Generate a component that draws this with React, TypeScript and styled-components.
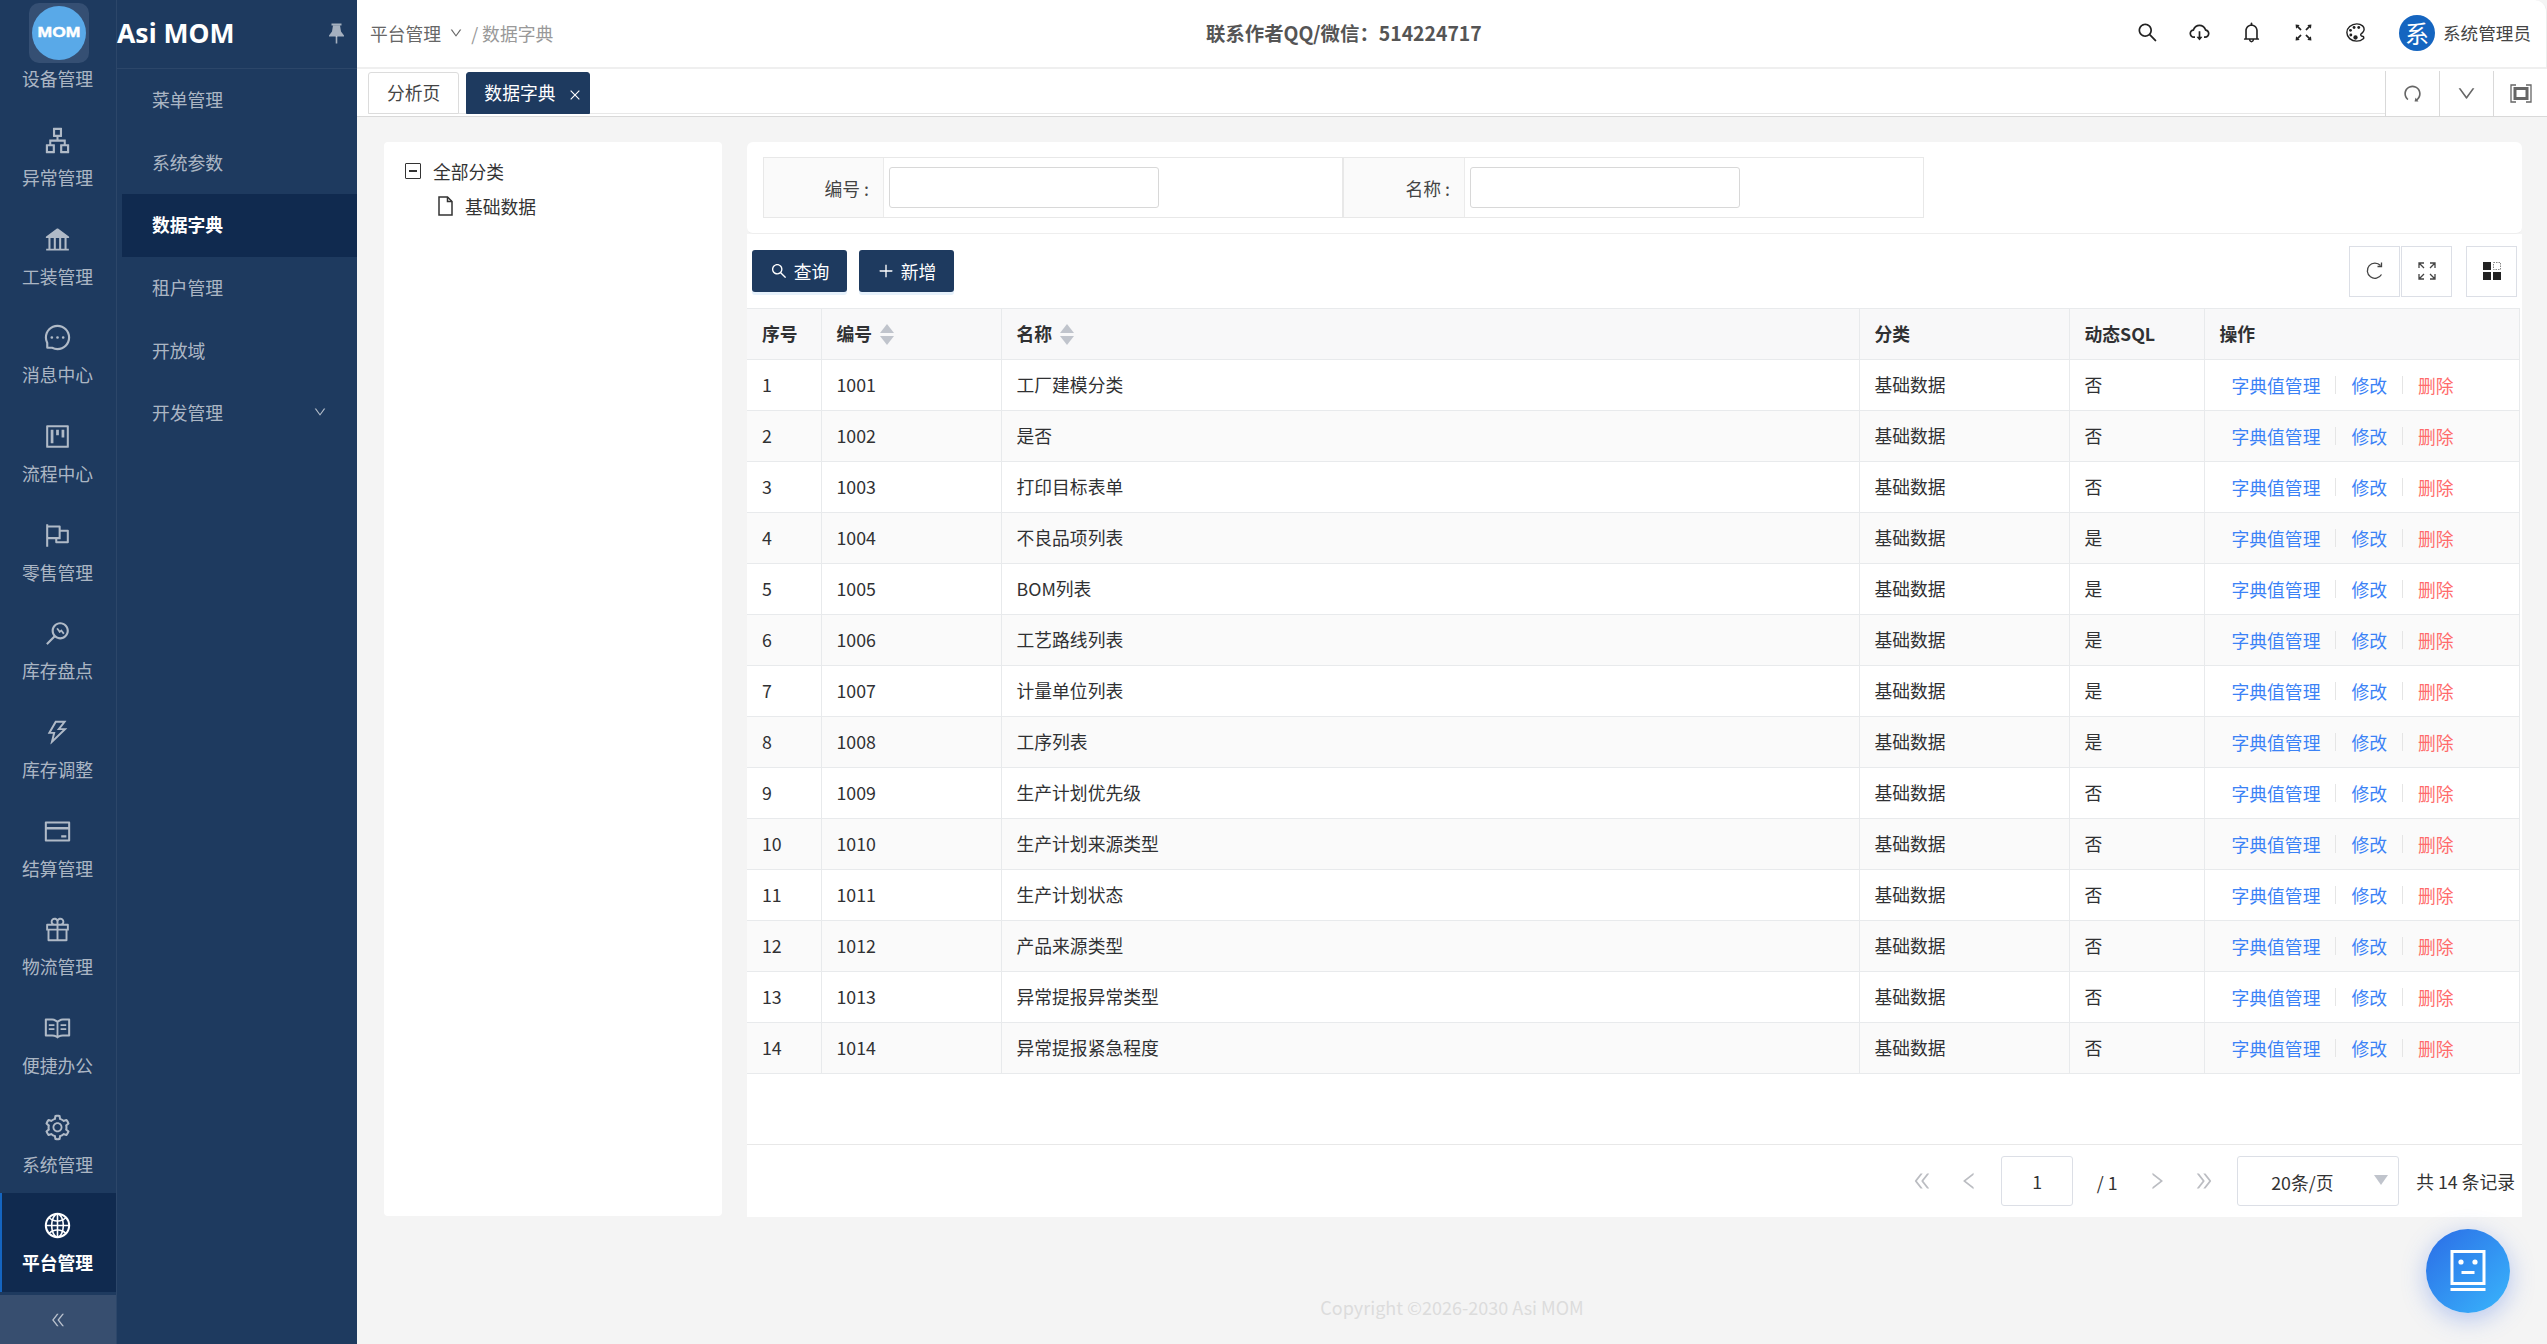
import React from 'react';
import styled, { createGlobalStyle } from 'styled-components';
import {
  AiOutlineApartment,
  AiFillBank,
  AiOutlineMessage,
  AiOutlineProject,
  AiOutlineFlag,
  AiOutlineMonitor,
  AiOutlineThunderbolt,
  AiOutlineCreditCard,
  AiOutlineGift,
  AiOutlineRead,
  AiOutlineSetting,
  AiOutlineGlobal,
  AiOutlineSearch,
  AiOutlineCloudDownload,
  AiOutlineBell,
  AiOutlineFullscreen,
  AiOutlineRedo,
  AiOutlineDown,
  AiOutlineClose,
  AiOutlinePlus,
  AiOutlineDoubleLeft,
  AiOutlineDoubleRight,
  AiOutlineLeft,
  AiOutlineRight,
} from 'react-icons/ai';
import { IoColorPaletteOutline } from 'react-icons/io5';

const FONT = '"Noto Sans CJK SC", "Noto Sans", sans-serif';

const GlobalStyle = createGlobalStyle`
  html, body {
    margin: 0;
    padding: 0;
    height: 100%;
    overflow: hidden;
    font-family: ${FONT};
    font-size: 17.5px;
    color: #303133;
  }
  * {
    box-sizing: border-box;
  }
`;

const Layout = styled.div`
  display: flex;
  width: 2547px;
  height: 1344px;
  background: #f4f4f4;
  position: relative;
  overflow: hidden;
`;

const Rail = styled.aside`
  width: 117px;
  flex: none;
  display: flex;
  flex-direction: column;
  background: #1e3a5f;
  border-right: 1px solid #2c4669;
`;

const LogoTile = styled.div`
  position: absolute;
  left: 29px;
  top: 3px;
  width: 60px;
  height: 60px;
  border-radius: 10px;
  background: #354f73;
  display: flex;
  align-items: center;
  justify-content: center;
`;

const LogoCircle = styled.div`
  width: 54px;
  height: 54px;
  border-radius: 50%;
  background: #59a9e8;
  display: flex;
  align-items: center;
  justify-content: center;
`;

const LogoText = styled.span`
  color: #fff;
  font: 900 17.5px "Liberation Sans", sans-serif;
  -webkit-text-stroke: 0.5px #fff;
  transform: scaleY(0.85);
  margin-top: -1px;
`;

const RailList = styled.div`
  flex: 1;
  min-height: 0;
  overflow: hidden;
  display: flex;
  flex-direction: column;
  justify-content: flex-end;
`;

const RailItem = styled.div<{ $active?: boolean }>`
  height: 98.7px;
  flex: none;
  display: flex;
  flex-direction: column;
  align-items: center;
  justify-content: center;
  gap: 9px;
  padding: ${(p) => (p.$active ? '0 1px 0 0' : '1.5px 1px 0 0')};
  font-size: 17.8px;
  line-height: 26px;
  color: ${(p) => (p.$active ? '#fff' : 'rgba(255, 255, 255, 0.65)')};
  font-weight: ${(p) => (p.$active ? 700 : 400)};
  background: ${(p) => (p.$active ? '#102a4f' : 'transparent')};
  box-shadow: ${(p) => (p.$active ? 'inset 2px 0 0 #1565c0' : 'none')};
  svg {
    font-size: 29px;
    display: block;
  }
`;

const Collapse = styled.div`
  height: 49px;
  margin-top: 3px;
  flex: none;
  background: #374e6f;
  display: flex;
  align-items: center;
  justify-content: center;
  color: rgba(255, 255, 255, 0.65);
  font-size: 18px;
`;

const SubMenu = styled.nav`
  width: 240px;
  flex: none;
  background: #1e3a5f;
  display: flex;
  flex-direction: column;
`;

const SubHead = styled.div`
  height: 69px;
  flex: none;
  display: flex;
  align-items: center;
  justify-content: space-between;
  padding: 0 13px 2px 0;
  border-bottom: 1px solid #2c4669;
`;

const AppTitle = styled.div`
  color: #fff;
  font-size: 26.5px;
  font-weight: 700;
  font-family: "Noto Sans", sans-serif;
`;

const SubList = styled.div`
  padding: 0 0 0 5px;
`;

const SubItem = styled.div<{ $active?: boolean }>`
  height: 62.7px;
  display: flex;
  align-items: center;
  justify-content: space-between;
  padding: 0 30px 3px 30px;
  font-size: 17.8px;
  color: ${(p) => (p.$active ? '#fff' : 'rgba(255, 255, 255, 0.65)')};
  font-weight: ${(p) => (p.$active ? 700 : 400)};
  background: ${(p) => (p.$active ? '#102a4f' : 'transparent')};
  svg {
    font-size: 14px;
  }
`;

const Main = styled.main`
  flex: 1;
  min-width: 0;
  display: flex;
  flex-direction: column;
`;

const Header = styled.header`
  height: 69px;
  flex: none;
  background: #fff;
  border-bottom: 2px solid #efefef;
  border-right: 1px solid #eee;
  border-top-right-radius: 12px;
  display: grid;
  grid-template-columns: 836px auto 1fr;
  align-items: center;
  padding: 0 15px 2px 13px;
`;

const Crumbs = styled.div`
  display: flex;
  align-items: center;
  gap: 8px;
  font-size: 17.8px;
  color: #666;
  svg {
    font-size: 14px;
  }
`;

const CrumbCurrent = styled.span`
  color: #999;
`;

const Contact = styled.div`
  font-size: 19.4px;
  font-weight: 700;
  color: #555;
`;

const HeadActions = styled.div`
  display: flex;
  align-items: center;
  justify-content: flex-end;
`;

const HeadIcon = styled.span`
  width: 52px;
  display: flex;
  justify-content: center;
  color: #222;
  font-size: 23px;
`;

const User = styled.div`
  display: flex;
  align-items: center;
  gap: 8px;
  margin-left: 18px;
  font-size: 17.6px;
  color: #444;
`;

const Avatar = styled.div`
  width: 36px;
  height: 36px;
  border-radius: 50%;
  background: #1565c0;
  color: #fff;
  display: flex;
  align-items: center;
  justify-content: center;
  font-size: 24px;
`;

const TabBar = styled.div`
  height: 48px;
  flex: none;
  background: #fff;
  border-bottom: 1px solid #d9d9d9;
  display: flex;
  align-items: flex-start;
  justify-content: space-between;
  padding-left: 11px;
`;

const Tabs = styled.div`
  display: flex;
  gap: 7px;
  align-items: flex-end;
  flex: 1;
  height: 45px;
  border-bottom: 1px solid #e8e8e8;
`;

const Tab = styled.div<{ $active?: boolean }>`
  height: 42px;
  margin-bottom: -1px;
  padding: ${(p) => (p.$active ? '0 7px 2px 17px' : '0 18px 2px')};
  display: flex;
  align-items: center;
  gap: 12px;
  font-size: 17.8px;
  border-radius: 3px 3px 0 0;
  background: ${(p) => (p.$active ? '#1e3a5f' : '#fff')};
  color: ${(p) => (p.$active ? '#fff' : '#444')};
  border: 1px solid ${(p) => (p.$active ? '#1e3a5f' : '#dcdcdc')};
  svg {
    font-size: 14px;
    margin-top: 5px;
  }
`;

const TabTools = styled.div`
  display: flex;
  height: 100%;
  padding-top: 2px;
`;

const TabTool = styled.div`
  width: 54px;
  display: flex;
  align-items: center;
  justify-content: center;
  border-left: 1px solid #d9d9d9;
  color: #666;
  font-size: 21px;
`;

const Content = styled.div`
  flex: 1;
  min-height: 0;
  display: flex;
  gap: 25px;
  padding: 25px 25px 0 27px;
`;

const TreeCard = styled.section`
  width: 338px;
  height: 1074px;
  flex: none;
  background: #fff;
  border-radius: 4px;
  padding: 11px 20px;
`;

const TreeRow = styled.div<{ $child?: boolean }>`
  display: flex;
  align-items: center;
  height: 35px;
  gap: 12px;
  padding-left: ${(p) => (p.$child ? '34px' : '1px')};
  font-size: 17.8px;
  color: #333;
`;

const FoldBox = styled.span`
  width: 16px;
  height: 16px;
  border: 1.5px solid #333;
  border-radius: 1px;
  display: flex;
  align-items: center;
  justify-content: center;
  &::before {
    content: '';
    width: 8px;
    height: 2px;
    background: #333;
  }
`;

const RightPanel = styled.section`
  width: 1775px;
  height: 1075px;
  flex: none;
  display: flex;
  flex-direction: column;
`;

const SearchCard = styled.div`
  height: 92px;
  flex: none;
  background: #fff;
  border-radius: 6px;
  padding: 15px 16px;
  border-bottom: 1px solid #eee;
`;

const SearchTable = styled.div`
  width: 1161px;
  height: 61px;
  display: grid;
  grid-template-columns: 120px 460px 121px 458px;
  border: 1px solid #e8e8e8;
`;

const SearchLabel = styled.div`
  background: #fafafa;
  display: flex;
  align-items: center;
  justify-content: flex-end;
  padding-right: 14px;
  font-size: 17.8px;
  color: #444;
  border-right: 1px solid #ebebeb;
`;

const SearchCell = styled.div`
  display: flex;
  align-items: center;
  padding-left: 5px;
  border-right: 2px solid #e8e8e8;
  &:last-child {
    border-right: none;
  }
`;

const TextInput = styled.input`
  width: 270px;
  height: 41px;
  border: 1px solid #d8d8d8;
  border-radius: 3px;
  background: #fff;
  outline: none;
`;

const GridCard = styled.div`
  flex: 1;
  min-height: 0;
  background: #fff;
  display: flex;
  flex-direction: column;
`;

const Toolbar = styled.div`
  height: 74px;
  flex: none;
  display: flex;
  align-items: center;
  justify-content: space-between;
  padding: 0 5px;
`;

const ToolGroup = styled.div`
  display: flex;
  gap: 12px;
`;

const PrimaryButton = styled.button`
  width: 95px;
  height: 42px;
  border: none;
  border-radius: 3px;
  background: #1e3a5f;
  color: #fff;
  font-family: ${FONT};
  font-size: 17.8px;
  display: flex;
  align-items: center;
  justify-content: center;
  gap: 6px;
  box-shadow: 0 3px 0 #e6f1fb;
  svg {
    font-size: 18px;
  }
`;

const IconGroup = styled.div`
  display: flex;
  gap: 1px;
`;

const SquareButton = styled.div<{ $gap?: boolean }>`
  width: 51px;
  height: 51px;
  border: 1px solid #dcdfe6;
  background: #fff;
  display: flex;
  align-items: center;
  justify-content: center;
  margin-left: ${(p) => (p.$gap ? '13px' : '0')};
  color: #444;
`;

const GridTable = styled.table`
  width: 1772px;
  border-collapse: collapse;
  table-layout: fixed;
  font-size: 17.8px;
  border-top: 1px solid #e8eaec;
  th {
    height: 51px;
    background: #f8f8f9;
    font-weight: 700;
    color: #303133;
    text-align: left;
    padding: 0 15px 2px;
    border: 1px solid #e8eaec;
    border-top: none;
  }
  td {
    height: 51px;
    padding: 0 15px 2px;
    color: #303133;
    border: 1px solid #e8eaec;
  }
  tr:nth-child(even) td {
    background: #fafafa;
  }
  th:first-child,
  td:first-child {
    border-left: none;
  }
`;

const SortHead = styled.div`
  display: flex;
  align-items: center;
  gap: 8px;
`;

const SortArrows = styled.span`
  display: flex;
  flex-direction: column;
  gap: 3px;
  margin-top: 2px;
  &::before,
  &::after {
    content: '';
    width: 0;
    height: 0;
    border-left: 7px solid transparent;
    border-right: 7px solid transparent;
  }
  &::before {
    border-bottom: 9px solid #c0c4cc;
  }
  &::after {
    border-top: 9px solid #c0c4cc;
  }
`;

const Actions = styled.div`
  display: flex;
  align-items: center;
  padding: 2px 0 0 12px;
  font-size: 17.8px;
`;

const ActionLink = styled.a<{ $danger?: boolean }>`
  color: ${(p) => (p.$danger ? '#ff6b6b' : '#3b82f6')};
  padding-right: 15px;
  margin-right: 15px;
  border-right: 1px solid ${(p) => (p.$danger ? 'transparent' : '#e5e5e5')};
  line-height: 18px;
`;

const Spacer = styled.div`
  flex: 1;
`;

const Pager = styled.div`
  height: 73px;
  flex: none;
  border-top: 1px solid #e8e8e8;
  display: flex;
  align-items: center;
  justify-content: flex-end;
  padding-right: 7px;
  font-size: 17.8px;
  color: #333;
`;

const PagerArrow = styled.span`
  width: 47.5px;
  display: flex;
  justify-content: center;
  color: #bbbdc2;
  font-size: 22px;
`;

const PageInput = styled.div`
  width: 72px;
  height: 50px;
  border: 1px solid #dcdfe6;
  border-radius: 3px;
  display: flex;
  align-items: center;
  justify-content: center;
  margin-left: 8px;
`;

const PageTotal = styled.span`
  width: 52px;
  margin-left: 8px;
  text-align: center;
  padding-top: 2px;
`;

const PageSize = styled.div`
  width: 162px;
  height: 50px;
  margin-left: 9px;
  border: 1px solid #dcdfe6;
  border-radius: 3px;
  display: flex;
  align-items: center;
  justify-content: space-between;
  padding: 2px 10px 0 33px;
  &::after {
    content: '';
    border-left: 7px solid transparent;
    border-right: 7px solid transparent;
    border-top: 10px solid #c0c4cc;
    margin-top: -4px;
  }
`;

const PageCount = styled.span`
  margin-left: 17px;
`;

const Copyright = styled.footer`
  height: 74px;
  flex: none;
  display: flex;
  align-items: center;
  justify-content: center;
  color: #dcdcdc;
  font-size: 18px;
`;

const Fab = styled.div`
  position: absolute;
  left: 2426px;
  top: 1229px;
  width: 84px;
  height: 84px;
  border-radius: 50%;
  background: linear-gradient(135deg, #2b6ce6, #39b6fc);
  box-shadow: 0 6px 24px rgba(60, 110, 230, 0.35);
  display: flex;
  align-items: center;
  justify-content: center;
`;

const railItems: { label: string; icon: React.ReactNode }[] = [
  { label: '设备管理', icon: <AiOutlineApartment style={{ visibility: 'hidden' }} /> },
  { label: '异常管理', icon: <AiOutlineApartment /> },
  { label: '工装管理', icon: <AiFillBank /> },
  { label: '消息中心', icon: <AiOutlineMessage /> },
  { label: '流程中心', icon: <AiOutlineProject /> },
  { label: '零售管理', icon: <AiOutlineFlag /> },
  { label: '库存盘点', icon: <AiOutlineMonitor /> },
  { label: '库存调整', icon: <AiOutlineThunderbolt /> },
  { label: '结算管理', icon: <AiOutlineCreditCard /> },
  { label: '物流管理', icon: <AiOutlineGift /> },
  { label: '便捷办公', icon: <AiOutlineRead /> },
  { label: '系统管理', icon: <AiOutlineSetting /> },
];

const rows: [string, string, string][] = [
  ['1001', '工厂建模分类', '否'],
  ['1002', '是否', '否'],
  ['1003', '打印目标表单', '否'],
  ['1004', '不良品项列表', '是'],
  ['1005', 'BOM列表', '是'],
  ['1006', '工艺路线列表', '是'],
  ['1007', '计量单位列表', '是'],
  ['1008', '工序列表', '是'],
  ['1009', '生产计划优先级', '否'],
  ['1010', '生产计划来源类型', '否'],
  ['1011', '生产计划状态', '否'],
  ['1012', '产品来源类型', '否'],
  ['1013', '异常提报异常类型', '否'],
  ['1014', '异常提报紧急程度', '否'],
];

function PinGlyph() {
  return (
    <svg width="15" height="21" viewBox="0 0 15 21" fill="rgba(255,255,255,0.6)">
      <rect x="2.5" y="0.5" width="10" height="2" />
      <path d="M4 2.5h7l1 6 3 4v1H0v-1l3-4z" />
      <rect x="6.7" y="13" width="1.6" height="7.5" />
    </svg>
  );
}

function FileIcon() {
  return (
    <svg width="15" height="20" viewBox="0 0 15 20" fill="none" stroke="#333" strokeWidth="1.5">
      <path d="M1 1h8.5L14 5.5V19H1z" />
      <path d="M9.5 1v4.5H14" />
    </svg>
  );
}

function ExpandGlyph() {
  return (
    <svg width="22" height="19" viewBox="0 0 22 19" fill="none" stroke="#666">
      <path d="M6 1H1v17h5M16 1h5v17h-5" strokeWidth="1.3" />
      <rect x="5" y="4.5" width="12" height="10" strokeWidth="3" />
    </svg>
  );
}

function ReloadGlyph() {
  return (
    <svg width="20" height="20" viewBox="0 0 20 20" fill="none" stroke="#444" strokeWidth="1.3">
      <path d="M16.5 13.5A7.6 7.6 0 1 1 15.5 4.5" />
      <path d="M16.5 1.5V5.5H12.5" />
    </svg>
  );
}

function ZoomGlyph() {
  return (
    <svg width="20" height="20" viewBox="0 0 20 20" fill="none" stroke="#444" strokeWidth="1.3">
      <path d="M2 7V2h5M2 2l5 5M13 2h5v5M18 2l-5 5M2 13v5h5M2 18l5-5M18 13v5h-5M18 18l-5-5" />
    </svg>
  );
}

function ColumnsGlyph() {
  return (
    <svg width="18" height="18" viewBox="0 0 18 18">
      <rect x="0" y="0" width="8" height="8" fill="#222" />
      <rect x="10.5" y="0.5" width="7" height="7" fill="none" stroke="#888" strokeDasharray="1.5 1" />
      <rect x="0" y="10" width="8" height="8" fill="#222" />
      <rect x="10" y="10" width="8" height="8" fill="#222" />
    </svg>
  );
}

function BotGlyph() {
  return (
    <svg width="36" height="42" viewBox="0 0 36 42" fill="none">
      <rect x="2" y="1.5" width="32" height="32" stroke="#fff" strokeWidth="3" />
      <circle cx="11" cy="12" r="2.6" fill="#fff" />
      <circle cx="25" cy="12" r="2.6" fill="#fff" />
      <rect x="11.5" y="21" width="13" height="3" fill="#fff" />
      <rect x="0.5" y="38" width="35" height="3" fill="#fff" />
    </svg>
  );
}

export default function App() {
  return (
    <Layout>
      <GlobalStyle />
      <Rail>
        <RailList>
          {railItems.map((item) => (
            <RailItem key={item.label}>
              {item.icon}
              <span>{item.label}</span>
            </RailItem>
          ))}
          <RailItem $active>
            <AiOutlineGlobal />
            <span>平台管理</span>
          </RailItem>
        </RailList>
        <Collapse>
          <AiOutlineDoubleLeft />
        </Collapse>
      </Rail>
      <LogoTile>
        <LogoCircle>
          <LogoText>MOM</LogoText>
        </LogoCircle>
      </LogoTile>
      <SubMenu>
        <SubHead>
          <AppTitle>Asi MOM</AppTitle>
          <PinGlyph />
        </SubHead>
        <SubList>
          <SubItem>菜单管理</SubItem>
          <SubItem>系统参数</SubItem>
          <SubItem $active>数据字典</SubItem>
          <SubItem>租户管理</SubItem>
          <SubItem>开放域</SubItem>
          <SubItem>
            开发管理
            <AiOutlineDown />
          </SubItem>
        </SubList>
      </SubMenu>
      <Main>
        <Header>
          <Crumbs>
            平台管理
            <AiOutlineDown />
            <CrumbCurrent>/ 数据字典</CrumbCurrent>
          </Crumbs>
          <Contact>联系作者QQ/微信：514224717</Contact>
          <HeadActions>
            <HeadIcon><AiOutlineSearch /></HeadIcon>
            <HeadIcon><AiOutlineCloudDownload /></HeadIcon>
            <HeadIcon><AiOutlineBell /></HeadIcon>
            <HeadIcon><AiOutlineFullscreen /></HeadIcon>
            <HeadIcon><IoColorPaletteOutline /></HeadIcon>
            <User>
              <Avatar>系</Avatar>
              系统管理员
            </User>
          </HeadActions>
        </Header>
        <TabBar>
          <Tabs>
            <Tab>分析页</Tab>
            <Tab $active>
              数据字典
              <AiOutlineClose />
            </Tab>
          </Tabs>
          <TabTools>
            <TabTool><AiOutlineRedo /></TabTool>
            <TabTool><AiOutlineDown /></TabTool>
            <TabTool><ExpandGlyph /></TabTool>
          </TabTools>
        </TabBar>
        <Content>
          <TreeCard>
            <TreeRow>
              <FoldBox />
              全部分类
            </TreeRow>
            <TreeRow $child>
              <FileIcon />
              基础数据
            </TreeRow>
          </TreeCard>
          <RightPanel>
            <SearchCard>
              <SearchTable>
                <SearchLabel>编号 :</SearchLabel>
                <SearchCell><TextInput /></SearchCell>
                <SearchLabel>名称 :</SearchLabel>
                <SearchCell><TextInput /></SearchCell>
              </SearchTable>
            </SearchCard>
            <GridCard>
              <Toolbar>
                <ToolGroup>
                  <PrimaryButton><AiOutlineSearch />查询</PrimaryButton>
                  <PrimaryButton><AiOutlinePlus />新增</PrimaryButton>
                </ToolGroup>
                <IconGroup>
                  <SquareButton><ReloadGlyph /></SquareButton>
                  <SquareButton><ZoomGlyph /></SquareButton>
                  <SquareButton $gap><ColumnsGlyph /></SquareButton>
                </IconGroup>
              </Toolbar>
              <GridTable>
                <colgroup>
                  <col style={{ width: 74 }} />
                  <col style={{ width: 180 }} />
                  <col style={{ width: 858 }} />
                  <col style={{ width: 210 }} />
                  <col style={{ width: 135 }} />
                  <col style={{ width: 315 }} />
                </colgroup>
                <thead>
                  <tr>
                    <th>序号</th>
                    <th><SortHead>编号<SortArrows /></SortHead></th>
                    <th><SortHead>名称<SortArrows /></SortHead></th>
                    <th>分类</th>
                    <th>动态SQL</th>
                    <th>操作</th>
                  </tr>
                </thead>
                <tbody>
                  {rows.map(([code, name, dyn], i) => (
                    <tr key={code}>
                      <td>{i + 1}</td>
                      <td>{code}</td>
                      <td>{name}</td>
                      <td>基础数据</td>
                      <td>{dyn}</td>
                      <td>
                        <Actions>
                          <ActionLink>字典值管理</ActionLink>
                          <ActionLink>修改</ActionLink>
                          <ActionLink $danger>删除</ActionLink>
                        </Actions>
                      </td>
                    </tr>
                  ))}
                </tbody>
              </GridTable>
              <Spacer />
              <Pager>
                <PagerArrow><AiOutlineDoubleLeft /></PagerArrow>
                <PagerArrow><AiOutlineLeft /></PagerArrow>
                <PageInput>1</PageInput>
                <PageTotal>/ 1</PageTotal>
                <PagerArrow><AiOutlineRight /></PagerArrow>
                <PagerArrow><AiOutlineDoubleRight /></PagerArrow>
                <PageSize>20条/页</PageSize>
                <PageCount>共 14 条记录</PageCount>
              </Pager>
            </GridCard>
          </RightPanel>
        </Content>
        <Copyright>Copyright ©2026-2030 Asi MOM</Copyright>
      </Main>
      <Fab><BotGlyph /></Fab>
    </Layout>
  );
}
